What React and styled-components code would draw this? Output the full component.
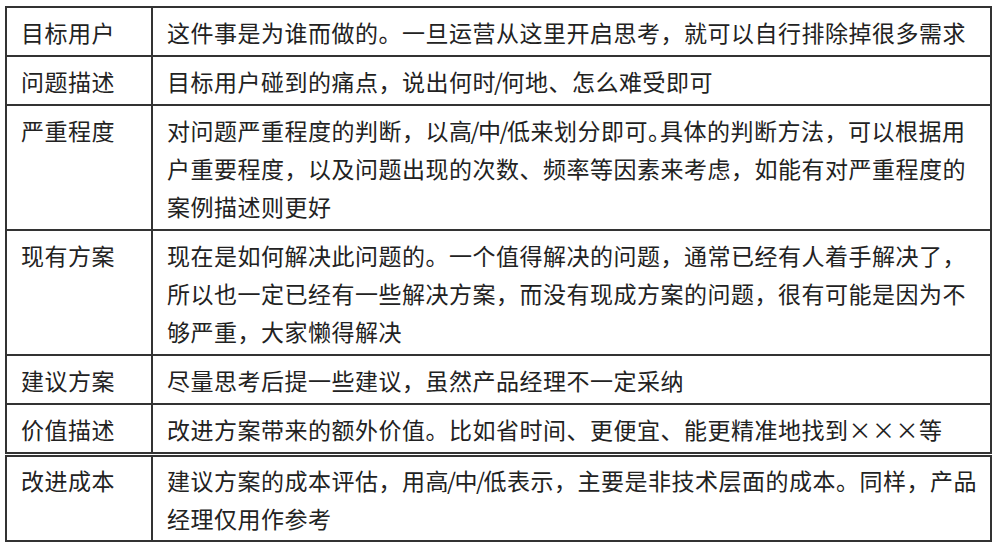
import React from "react";
import styled, { createGlobalStyle } from "styled-components";

const GlobalStyle = createGlobalStyle`
	html, body {
		margin: 0;
		padding: 0;
		background: #ffffff;
	}
	body {
		font-family: "Noto Sans CJK SC", "Noto Sans", sans-serif;
		color: #222222;
	}
`;

// "~。" marks a full stop that is set half width
const rows = [
	{ label: "目标用户", lines: ["这件事是为谁而做的。一旦运营从这里开启思考，就可以自行排除掉很多需求"] },
	{ label: "问题描述", lines: ["目标用户碰到的痛点，说出何时/何地、怎么难受即可"] },
	{
		label: "严重程度",
		lines: [
			"对问题严重程度的判断，以高/中/低来划分即可~。具体的判断方法，可以根据用",
			"户重要程度，以及问题出现的次数、频率等因素来考虑，如能有对严重程度的",
			"案例描述则更好",
		],
	},
	{
		label: "现有方案",
		lines: [
			"现在是如何解决此问题的。一个值得解决的问题，通常已经有人着手解决了，",
			"所以也一定已经有一些解决方案，而没有现成方案的问题，很有可能是因为不",
			"够严重，大家懒得解决",
		],
	},
	{ label: "建议方案", lines: ["尽量思考后提一些建议，虽然产品经理不一定采纳"] },
	{ label: "价值描述", lines: ["改进方案带来的额外价值。比如省时间、更便宜、能更精准地找到×××等"] },
];

const lastRows = [
	{
		label: "改进成本",
		lines: [
			"建议方案的成本评估，用高/中/低表示，主要是非技术层面的成本。同样，产品",
			"经理仅用作参考",
		],
	},
];

const Page = styled.div`
	padding: 6px 0 0 5px;
	width: 987px;
`;

const Sheet = styled.div`
	border: 2px solid #333333;
	border-bottom: none;
	margin-top: ${(p) => (p.$gap ? "1px" : "0")};
`;

const Row = styled.div`
	display: grid;
	grid-template-columns: 146px 1fr;
	border-bottom: 2px solid #333333;
`;

const Cell = styled.div`
	font-size: 23px;
	line-height: 38px;
	letter-spacing: 0.5px;
	padding: ${(p) => (p.$tight ? "4px 0 3px" : "5px 0 4px")};
	white-space: nowrap;
`;

const Label = styled(Cell)`
	padding-left: 14px;
	border-right: 2px solid #333333;
`;

const Content = styled(Cell)`
	padding-left: 14px;
`;

const Slash = styled.span`
	margin: 0 -2px;
`;

const HalfStop = styled.span`
	font-feature-settings: "halt";
`;

const renderLine = (text) =>
	text.split(/(\/|~。)/).map((part, i) => {
		if (part === "/") return <Slash key={i}>/</Slash>;
		if (part === "~。") return <HalfStop key={i}>。</HalfStop>;
		return part;
	});

const TableBlock = ({ items, gap, tight }) => (
	<Sheet $gap={gap}>
		{items.map((r) => (
			<Row key={r.label}>
				<Label $tight={tight}>{r.label}</Label>
				<Content $tight={tight}>
					{r.lines.map((l, i) => (
						<React.Fragment key={i}>
							{i > 0 && <br />}
							{renderLine(l)}
						</React.Fragment>
					))}
				</Content>
			</Row>
		))}
	</Sheet>
);

export default function App() {
	return (
		<>
			<GlobalStyle />
			<Page>
				<TableBlock items={rows} />
				<TableBlock items={lastRows} gap tight />
			</Page>
		</>
	);
}
